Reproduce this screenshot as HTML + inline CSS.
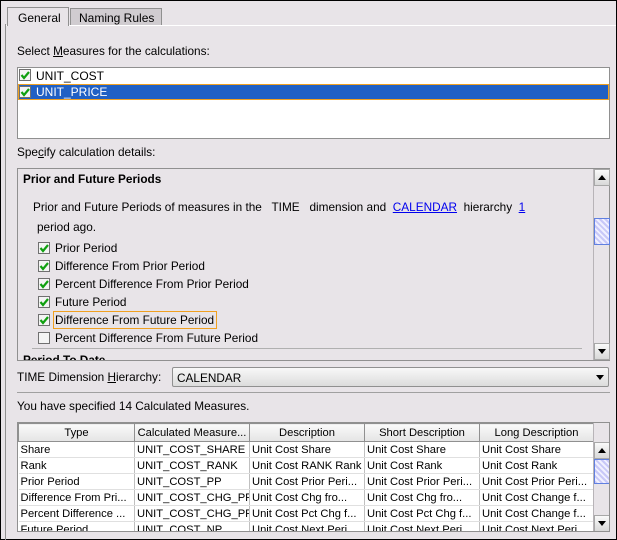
<!DOCTYPE html>
<html><head><style>
*{box-sizing:border-box}
body{margin:0;width:617px;height:540px;background:#e8e4e8;font-family:"Liberation Sans","DejaVu Sans",sans-serif;font-size:11.8px;color:#000;position:relative;overflow:hidden}
.a{position:absolute;white-space:nowrap}
.cb{position:absolute;width:12px;height:12px;border:1px solid #707070;background:#f4f4f4}
.cb svg{position:absolute;left:0px;top:0px}
.sb{position:absolute;background:#e8e4e8;border-left:1px solid #b8b4b8}
.btn{position:absolute;left:0;width:16px;height:17px;background:linear-gradient(#fafafa,#d8d8d8);border:1px solid #a8a8a8}
.thumb{position:absolute;left:0;width:16px;background:repeating-linear-gradient(45deg,#c8c8f8 0 2px,#f0f0ff 2px 4px);border:1px solid #6080e0}
td,th{padding:0 2px;height:16px;font-weight:normal;border-right:1px solid #c0c0c0;border-bottom:1px solid #e0e0e0;overflow:hidden;white-space:nowrap;text-align:left}
th{text-align:center;background:linear-gradient(#fafafa,#e4e4e4);border:1px solid #909090;height:18px}
</style></head><body>
<div class="a" style="left:0;top:0;width:617px;height:540px;border:1px solid #000"></div>
<div class="a" style="left:5px;top:24px;width:1px;height:516px;background:#909090"></div>
<div class="a" style="left:6px;top:25px;width:610px;height:1px;background:#fff"></div>
<div class="a" style="left:7px;top:7px;width:62px;height:19px;background:#e8e4e8;border:1px solid #909090;border-bottom:none;padding:3px 0 0 10px;font-size:12px">General</div>
<div class="a" style="left:70px;top:8px;width:92px;height:17px;background:#d0ccd0;border:1px solid #909090;border-bottom:none;padding:2px 0 0 8px;font-size:12px">Naming Rules</div>
<div class="a" style="left:17px;top:44px">Select <u>M</u>easures for the calculations:</div>
<div class="a" style="left:17px;top:67px;width:593px;height:72px;background:#fff;border:1px solid #909090"></div>
<div class="a" style="left:18px;top:84px;width:591px;height:16px;background:#2060c4;border:1px solid #f0a020"></div>
<div class="cb" style="left:19px;top:69px"><svg width="10" height="10"><path d="M1.5 5 L4 8 L9 2" stroke="#10a010" stroke-width="2.2" fill="none"/></svg></div>
<div class="a" style="left:36px;top:69px;font-size:12px">UNIT_COST</div>
<div class="cb" style="left:19px;top:86px"><svg width="10" height="10"><path d="M1.5 5 L4 8 L9 2" stroke="#10a010" stroke-width="2.2" fill="none"/></svg></div>
<div class="a" style="left:36px;top:85px;font-size:12px;color:#fff">UNIT_PRICE</div>
<div class="a" style="left:17px;top:145px">Spe<u>c</u>ify calculation details:</div>
<div class="a" style="left:17px;top:168px;width:593px;height:193px;border:1px solid #909090;overflow:hidden">
 <div class="a" style="left:5px;top:3px;font-weight:bold">Prior and Future Periods</div>
 <div class="a" style="left:15px;top:31px">Prior and Future Periods of measures in the &nbsp; TIME &nbsp; dimension and &nbsp;<span style="color:#0000ee;text-decoration:underline">CALENDAR</span>&nbsp; hierarchy &nbsp;<span style="color:#0000ee;text-decoration:underline">1</span></div>
 <div class="a" style="left:19px;top:51px">period ago.</div>
 <div class="a" style="left:14px;top:179px;width:550px;height:1px;background:#b0b0b0"></div>
 <div class="a" style="left:5px;top:184px;font-weight:bold">Period To Date</div>
</div>
<div class="cb" style="left:38px;top:242px"><svg width="10" height="10"><path d="M1.5 5 L4 8 L9 2" stroke="#10a010" stroke-width="2.2" fill="none"/></svg></div><div class="a" style="left:55px;top:241px">Prior Period</div>
<div class="cb" style="left:38px;top:260px"><svg width="10" height="10"><path d="M1.5 5 L4 8 L9 2" stroke="#10a010" stroke-width="2.2" fill="none"/></svg></div><div class="a" style="left:55px;top:259px">Difference From Prior Period</div>
<div class="cb" style="left:38px;top:278px"><svg width="10" height="10"><path d="M1.5 5 L4 8 L9 2" stroke="#10a010" stroke-width="2.2" fill="none"/></svg></div><div class="a" style="left:55px;top:277px">Percent Difference From Prior Period</div>
<div class="cb" style="left:38px;top:296px"><svg width="10" height="10"><path d="M1.5 5 L4 8 L9 2" stroke="#10a010" stroke-width="2.2" fill="none"/></svg></div><div class="a" style="left:55px;top:295px">Future Period</div>
<div class="cb" style="left:38px;top:314px"><svg width="10" height="10"><path d="M1.5 5 L4 8 L9 2" stroke="#10a010" stroke-width="2.2" fill="none"/></svg></div><div class="a" style="left:53px;top:311px;border:1px solid #f0a020;padding:1px 2px 0 1px;height:18px">Difference From Future Period</div>
<div class="cb" style="left:38px;top:332px"></div><div class="a" style="left:55px;top:331px">Percent Difference From Future Period</div>
<div class="sb" style="left:593px;top:169px;width:16px;height:191px">
 <div class="btn" style="top:0"><svg width="14" height="15"><path d="M3 10 L7 5 L11 10Z" fill="#000"/></svg></div>
 <div class="thumb" style="top:49px;height:27px"></div>
 <div class="btn" style="top:174px"><svg width="14" height="15"><path d="M3 5 L7 10 L11 5Z" fill="#000"/></svg></div>
</div>
<div class="a" style="left:17px;top:370px">TIME Dimension <u>H</u>ierarchy:</div>
<div class="a" style="left:172px;top:367px;width:437px;height:20px;border:1px solid #909090;border-radius:2px;background:linear-gradient(#f8f8f8,#dcdcdc);padding:3px 0 0 4px">CALENDAR<svg style="position:absolute;right:3px;top:5px" width="10" height="8"><path d="M1 2 L5 7 L9 2Z" fill="#000"/></svg></div>
<div class="a" style="left:17px;top:392px;width:593px;height:1px;background:#a0a0a0"></div>
<div class="a" style="left:17px;top:399px">You have specified 14 Calculated Measures.</div>
<div class="a" style="left:17px;top:422px;width:593px;height:110px;border:1px solid #909090;background:#fff;overflow:hidden">
<table style="border-collapse:collapse;table-layout:fixed;width:575px;font-size:11.2px" cellspacing="0">
<colgroup><col style="width:116px"><col style="width:115px"><col style="width:115px"><col style="width:115px"><col style="width:114px"></colgroup>
<tr><th>Type</th><th>Calculated Measure...</th><th>Description</th><th>Short Description</th><th>Long Description</th></tr>
<tr><td>Share</td><td>UNIT_COST_SHARE</td><td>Unit Cost Share</td><td>Unit Cost Share</td><td>Unit Cost Share</td></tr>
<tr><td>Rank</td><td>UNIT_COST_RANK</td><td>Unit Cost RANK Rank</td><td>Unit Cost Rank</td><td>Unit Cost Rank</td></tr>
<tr><td>Prior Period</td><td>UNIT_COST_PP</td><td>Unit Cost Prior Peri...</td><td>Unit Cost Prior Peri...</td><td>Unit Cost Prior Peri...</td></tr>
<tr><td>Difference From Pri...</td><td>UNIT_COST_CHG_PP</td><td>Unit Cost Chg fro...</td><td>Unit Cost Chg fro...</td><td>Unit Cost Change f...</td></tr>
<tr><td>Percent Difference ...</td><td>UNIT_COST_CHG_PP</td><td>Unit Cost Pct Chg f...</td><td>Unit Cost Pct Chg f...</td><td>Unit Cost Change f...</td></tr>
<tr><td>Future Period</td><td>UNIT_COST_NP</td><td>Unit Cost Next Peri...</td><td>Unit Cost Next Peri...</td><td>Unit Cost Next Peri...</td></tr>
</table>
<div class="sb" style="left:575px;top:0;width:17px;height:110px;background:#e8e4e8">
 <div class="btn" style="top:19px"><svg width="14" height="15"><path d="M3 10 L7 5 L11 10Z" fill="#000"/></svg></div>
 <div class="thumb" style="top:36px;height:25px"></div>
 <div class="btn" style="top:92px"><svg width="14" height="15"><path d="M3 5 L7 10 L11 5Z" fill="#000"/></svg></div>
</div>
</div>
</body></html>
